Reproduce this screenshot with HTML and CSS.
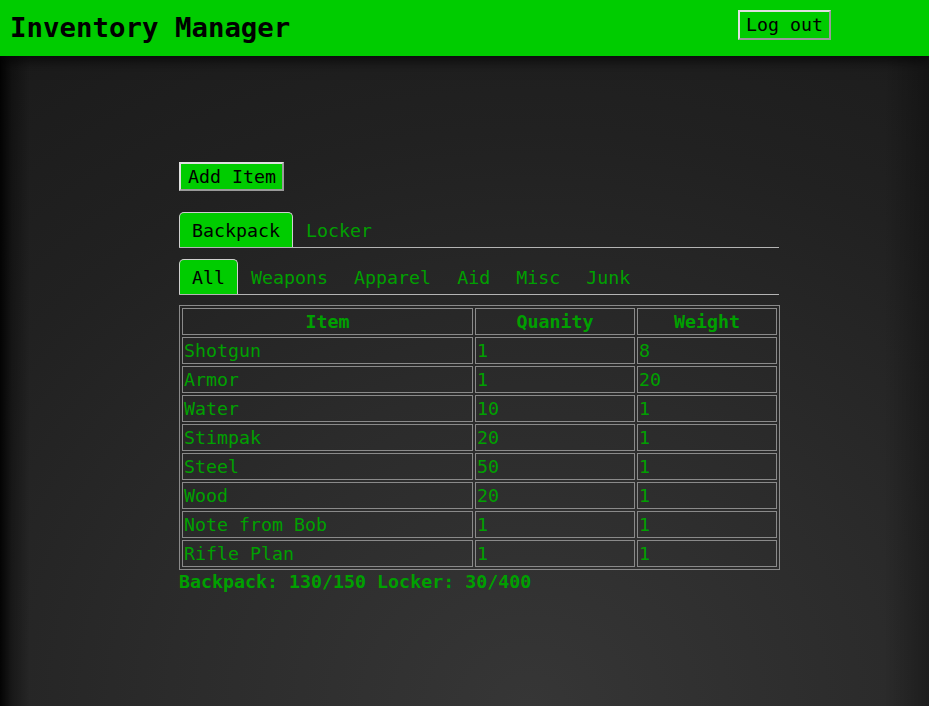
FILE: index.html
```html
<!DOCTYPE html>
<html lang="en">
<head>
<meta charset="utf-8">
<title>Inventory Manager</title>
<link rel="stylesheet" href="styles.css">
</head>
<body>
<header class="topbar">
  <h1 class="title">Inventory Manager</h1>
  <button class="btn logout">Log out</button>
</header>
<main class="page">
  <div class="content">
    <button class="btn add">Add Item</button>
    <nav class="tabs tabs-main">
      <span class="tab active">Backpack</span>
      <span class="tab">Locker</span>
    </nav>
    <nav class="tabs tabs-sub">
      <span class="tab active">All</span>
      <span class="tab">Weapons</span>
      <span class="tab">Apparel</span>
      <span class="tab">Aid</span>
      <span class="tab">Misc</span>
      <span class="tab">Junk</span>
    </nav>
    <table class="items">
      <thead>
        <tr><th class="c-item">Item</th><th class="c-qty">Quanity</th><th class="c-wt">Weight</th></tr>
      </thead>
      <tbody>
        <tr><td>Shotgun</td><td>1</td><td>8</td></tr>
        <tr><td>Armor</td><td>1</td><td>20</td></tr>
        <tr><td>Water</td><td>10</td><td>1</td></tr>
        <tr><td>Stimpak</td><td>20</td><td>1</td></tr>
        <tr><td>Steel</td><td>50</td><td>1</td></tr>
        <tr><td>Wood</td><td>20</td><td>1</td></tr>
        <tr><td>Note from Bob</td><td>1</td><td>1</td></tr>
        <tr><td>Rifle Plan</td><td>1</td><td>1</td></tr>
      </tbody>
    </table>
    <p class="totals">Backpack: 130/150 Locker: 30/400</p>
  </div>
</main>
</body>
</html>
```

FILE: styles.css
```css
html, body {
  margin: 0;
  padding: 0;
  height: 100%;
}
body {
  font-family: "DejaVu Sans Mono", "Liberation Mono", monospace;
  font-size: 18.3px;
  line-height: 23px;
  color: #00a000;
  background:
    linear-gradient(to right, rgba(0,0,0,0.9) 0, rgba(0,0,0,0.35) 12px, rgba(0,0,0,0) 30px),
    linear-gradient(to left, rgba(0,0,0,0.3) 0, rgba(0,0,0,0) 45px),
    radial-gradient(ellipse 900px 800px at 57% 100%, #363636 0%, #2b2b2b 40%, #212121 72%, #1b1b1b 100%);
  background-color: #1b1b1b;
  min-height: 706px;
}
.topbar {
  display: flex;
  align-items: flex-start;
  justify-content: space-between;
  height: 56px;
  background: #00cc00;
  padding: 0 98px 0 10px;
  box-sizing: border-box;
  box-shadow: 0 3px 14px rgba(0,0,0,0.85);
  position: relative;
}
.title {
  margin: 0;
  padding-top: 11px;
  font-size: 27.4px;
  line-height: 34px;
  font-weight: bold;
  color: #000;
}
.btn {
  font-family: inherit;
  font-size: 18.3px;
  line-height: 23px;
  color: #000;
  background: #00cc00;
  border: 2px solid;
  border-color: #e0e0e0 #9a9a9a #9a9a9a #e0e0e0;
  padding: 1px 6px;
  margin: 0;
  cursor: pointer;
}
.logout {
  margin-top: 10px;
  padding: 1px 6px 2px;
}
.page {
  padding-top: 106px;
}
.content {
  width: 600px;
  margin-left: 179px;
}
.add {
  display: block;
  padding: 1px 6px 1px 7px;
}
.tabs {
  display: flex;
  border-bottom: 1px solid #b4b4b4;
}
.tabs-main {
  margin-top: 21px;
}
.tabs-sub {
  margin-top: 11px;
}
.tab {
  padding: 6px 12px 5px;
  border: 1px solid transparent;
  border-bottom: none;
  border-radius: 5px 5px 0 0;
  color: #00a000;
}
.tab.active {
  background: #00cc00;
  color: #000;
  border-color: #cfcfcf;
}
.items {
  margin-top: 10px;
  border: 1px solid #8a8a8a;
  border-spacing: 2px;
  table-layout: fixed;
  width: 601px;
}
.items th, .items td {
  border: 1px solid #8a8a8a;
  padding: 1px;
  line-height: 23px;
  text-align: left;
  white-space: nowrap;
}
.items th {
  text-align: center;
  font-weight: bold;
}
.c-item { width: 287px; }
.c-qty { width: 156px; }
.c-wt { width: 136px; }
.totals {
  margin: 0;
  font-weight: bold;
}
```
